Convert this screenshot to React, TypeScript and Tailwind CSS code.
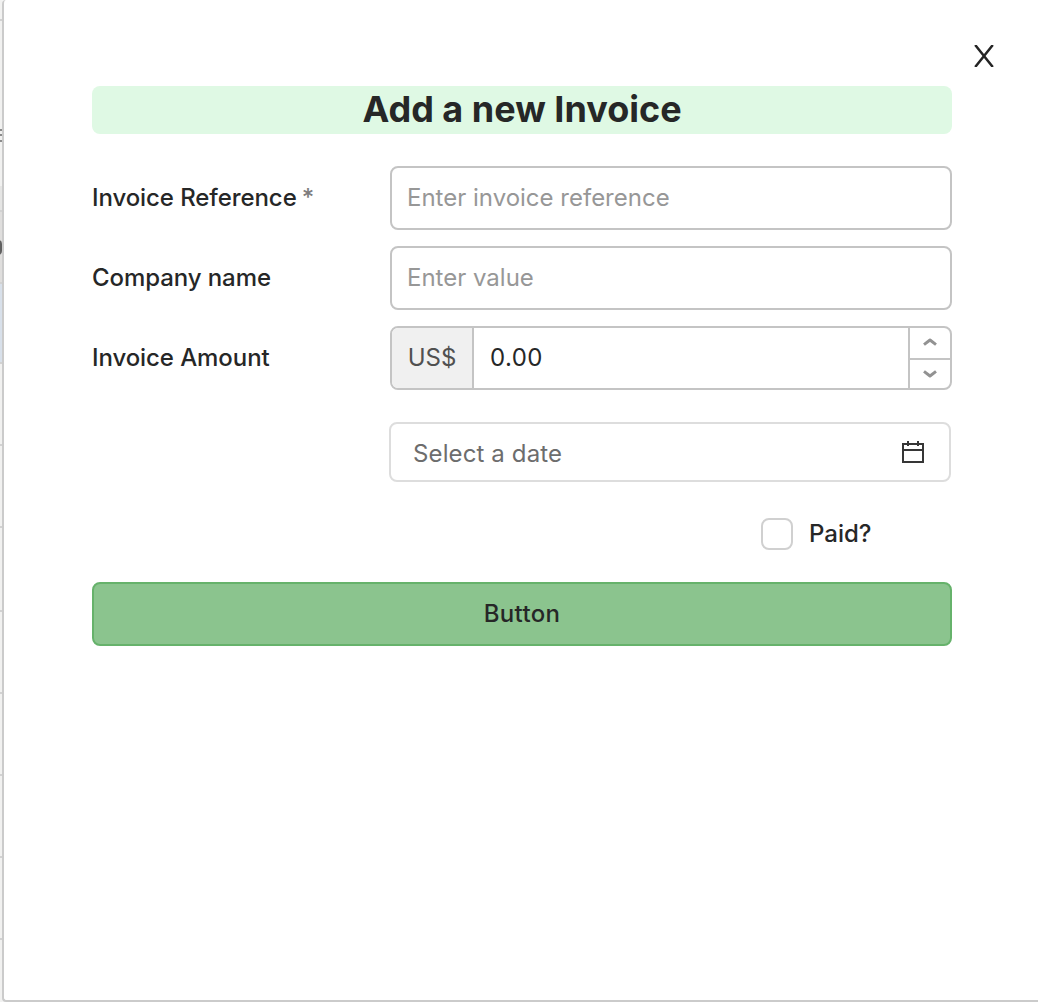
import React from "react";

const rows = [
  "h-[21px] bg-[#f2f2f1]",
  "h-[191px] bg-[#f1f1f0]",
  "h-[72px] bg-[#dfdedd]",
  "h-[80px] bg-[#d8e0ea]",
  "h-[82px] bg-[#f1f1f0]",
  "h-[82px] bg-[#f1f1f0]",
  "h-[84px] bg-[#f1f1f0]",
  "h-[82px] bg-[#f1f1f0]",
  "h-[82px] bg-[#f1f1f0]",
  "h-[82px] bg-[#f1f1f0]",
  "h-[82px] bg-[#f1f1f0]",
];

function TableEdge() {
  return (
    <div className="relative h-[1002px] w-[2px] shrink-0 overflow-hidden bg-[#f1f1f0]">
      <div className="flex flex-col">
        {rows.map((c, i) => (
          <div key={i} className={`shrink-0 border-b-2 border-[#d2d2d2] ${c}`} />
        ))}
      </div>
      <div className="absolute left-0 top-[186px] h-[24px] w-[2px] bg-[#e5e5e4]" />
      <div className="absolute left-0 top-[129px] h-[2px] w-[2px] bg-[#8b8b8b]" />
      <div className="absolute left-0 top-[134px] h-[2px] w-[2px] bg-[#8b8b8b]" />
      <div className="absolute left-0 top-[140px] h-[2px] w-[2px] bg-[#8b8b8b]" />
      <div className="absolute -left-[5px] top-[240px] h-[15px] w-[7px] rounded-r-[4px] border-2 border-[#606060]" />
    </div>
  );
}

function Field({ label, required, children }: { label: string; required?: boolean; children: React.ReactNode }) {
  return (
    <div className="flex h-16 items-center">
      <label className="w-[298px] shrink-0 font-medium leading-8 tracking-[-0.08px]">
        {label}
        {required && <span className="ml-[5px] font-medium text-[#7d7d7d]">*</span>}
      </label>
      {children}
    </div>
  );
}

const inputClass =
  "h-16 min-w-0 flex-1 rounded-lg border-2 border-[#c4c4c4] bg-white px-[15px] pb-0.5 outline-none placeholder:text-[#979797]";

function Chevron({ down }: { down?: boolean }) {
  return (
    <svg width="14" height="8" viewBox="0 0 14 8" fill="none" stroke="#929292" strokeWidth="3" strokeLinejoin="round">
      <path d={down ? "M1 1.4 7 6 13 1.4" : "M1 6.6 7 2 13 6.6"} />
    </svg>
  );
}

export default function App() {
  return (
    <div className="flex h-[1002px] w-[1038px] overflow-hidden bg-[#f4f4f4] font-['Inter',sans-serif] text-2xl text-[#262727]">
      <TableEdge />
      <main className="relative h-[1002px] flex-1 rounded-l-[4px] border-b-2 border-l-2 border-[#cbcbcb] bg-white">
        <button aria-label="Close" className="absolute left-[970px] top-[45px]">
          <svg width="20" height="22" viewBox="0 0 20 22" fill="none" stroke="#242424" strokeWidth="2.5">
            <path d="M1.2 0 18.8 22M18.8 0 1.2 22" />
          </svg>
        </button>
        <div className="ml-[88px] flex w-[860px] flex-col pt-[86px]">
          <h1 className="h-12 rounded-lg bg-[#dff9e4] text-center text-4xl font-bold leading-[46px]">Add a new Invoice</h1>
          <div className="mt-8 flex flex-col gap-4">
            <Field label="Invoice Reference" required>
              <input className={inputClass} placeholder="Enter invoice reference" />
            </Field>
            <Field label="Company name">
              <input className={inputClass} placeholder="Enter value" />
            </Field>
            <Field label="Invoice Amount">
              <div className="flex h-16 flex-1 overflow-hidden rounded-lg border-2 border-[#c4c4c4]">
                <span className="flex w-[82px] items-center justify-center border-r-2 border-[#c4c4c4] bg-[#f0f0f0] text-[#505050]">US$</span>
                <input className="min-w-0 flex-1 px-4 tracking-[0.45px] outline-none" defaultValue="0.00" />
                <div className="flex w-[42px] flex-col border-l-2 border-[#c4c4c4]">
                  <button className="flex h-8 items-center justify-center border-b-2 border-[#c4c4c4] pb-0.5"><Chevron /></button>
                  <button className="flex flex-1 items-center justify-center"><Chevron down /></button>
                </div>
              </div>
            </Field>
          </div>
          <div className="-ml-px mt-8 flex h-[60px] w-[562px] translate-x-[298px] items-center justify-between rounded-lg border-2 border-[#dddddd] pl-[22px] pr-6 pt-[3px] tracking-[0.12px] text-[#6d6d6d]">
            <span>Select a date</span>
            <svg width="24" height="24" viewBox="0 0 24 24" fill="none" stroke="#363636" strokeWidth="2" className="-mt-0.5 shrink-0">
              <path d="M2 3h20v18H2zM2 9h20M7 0v5M17 0v5" />
            </svg>
          </div>
          <label className="ml-[669px] mt-9 flex h-8 items-center gap-4 font-medium">
            <span className="size-8 rounded-lg border-2 border-[#d0d0d0]" />
            Paid?
          </label>
          <button className="mt-8 h-16 rounded-lg border-2 border-[#66b26b] bg-[#8bc48e] font-medium tracking-[0.3px]">Button</button>
        </div>
      </main>
    </div>
  );
}
